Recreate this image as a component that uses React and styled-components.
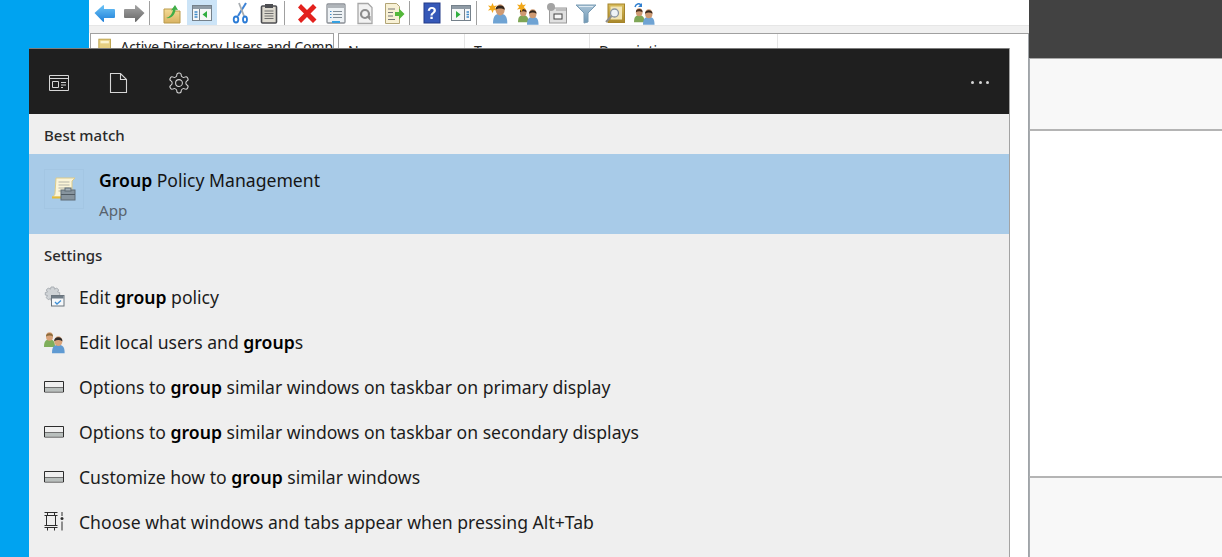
import React from "react";
import styled, { createGlobalStyle } from "styled-components";

const GlobalStyle = createGlobalStyle`
  html, body { margin: 0; padding: 0; height: 100%; overflow: hidden; }
  body { font-family: "Noto Sans", "Open Sans", sans-serif; background: #00a3f0; }
  #root { height: 100%; }
`;

const Desktop = styled.div`
  position: relative;
  display: flex;
  width: 1222px;
  height: 557px;
  overflow: hidden;
  background: #00a3f0;
`;

const DesktopStrip = styled.div`
  width: 89px;
  flex: none;
`;

const MmcWindow = styled.div`
  width: 940px;
  flex: none;
  display: flex;
  flex-direction: column;
  background: #fff;
`;

const Toolbar = styled.div`
  height: 25px;
  display: flex;
  align-items: center;
  padding-left: 1px;
  flex: none;
`;

const ToolIcon = styled.span`
  width: ${({ $w }) => $w || 29}px;
  margin-left: ${({ $gap }) => $gap || 0}px;
  height: 25px;
  flex: none;
  display: flex;
  align-items: center;
  justify-content: center;
  background: ${({ $active }) => ($active ? "#cce4f7" : "transparent")};
  svg { display: block; overflow: visible; filter: blur(0.3px); }
`;

const ToolSep = styled.span`
  width: 1px;
  height: 24px;
  margin: 0 7px 0 1px;
  flex: none;
  background: #a0a0a0;
`;

const Gutter = styled.div`
  height: 8px;
  flex: none;
  background: #f0f0f0;
  border-top: 1px solid #e6e6e6;
  box-sizing: border-box;
`;

const Panes = styled.div`
  flex: 1;
  display: flex;
  gap: 4px;
  padding-left: 1px;
`;

const TreePane = styled.div`
  width: 244px;
  flex: none;
  border: 1px solid #a0a0a0;
  border-bottom: none;
  box-sizing: border-box;
  display: flex;
  gap: 9px;
  padding: 3px 0 0 7px;
  font-size: 13.8px;
  color: #222;
  white-space: nowrap;
  overflow: hidden;
`;

const ListPane = styled.div`
  flex: 1;
  border: 1px solid #a0a0a0;
  border-right-color: #a0a4a8;
  border-bottom: none;
  box-sizing: border-box;
  display: flex;
`;

const ListHead = styled.div`
  width: ${({ $w }) => $w}px;
  flex: none;
  height: 22px;
  box-sizing: border-box;
  padding: 7px 0 0 9px;
  font-size: 14px;
  color: #222;
  border-right: 1px solid #e5e5e5;
`;

const SideWindow = styled.div`
  flex: 1;
  display: flex;
  flex-direction: column;
  background: #fff;
`;

const SideTitle = styled.div`
  height: 58px;
  flex: none;
  background: #424242;
`;

const SideHeader = styled.div`
  height: 73px;
  flex: none;
  box-sizing: border-box;
  background: #f8f8f8;
  border-left: 1px solid #a8acb0;
  border-top: 1px solid #a8a8a8;
  border-bottom: 2px solid #b4b4b4;
`;

const SideBody = styled.div`
  flex: 1;
  border-left: 1px solid #a8acb0;
`;

const SideFooter = styled.div`
  height: 81px;
  flex: none;
  box-sizing: border-box;
  background: #f8f8f8;
  border-left: 1px solid #a8acb0;
  border-top: 2px solid #b4b4b4;
`;

const SearchFlyout = styled.div`
  position: absolute;
  left: 29px;
  top: 48px;
  width: 981px;
  height: 509px;
  box-sizing: border-box;
  display: flex;
  flex-direction: column;
  background: #efefef;
  border-right: 1px solid #a3a3a3;
`;

const FlyoutBar = styled.div`
  height: 66px;
  flex: none;
  display: flex;
  align-items: center;
  background: #1f1f1f;
  border-top: 1px solid #7d7d7d;
  box-sizing: border-box;
  padding: 2px 20px 0 20px;
  color: #d6d6d6;
`;

const BarIcon = styled.span`
  width: 60px;
  flex: none;
  display: flex;
  svg { display: block; }
`;

const MoreDots = styled.span`
  margin-left: auto;
  display: flex;
  gap: 4.5px;
  i {
    width: 3px;
    height: 3px;
    border-radius: 50%;
    background: #d6d6d6;
  }
`;

const SectionTitle = styled.div`
  height: 40px;
  flex: none;
  box-sizing: border-box;
  padding: 11px 0 0 15px;
  font-size: 15px;
  line-height: 20px;
  font-weight: 500;
  color: #2a2a2a;
`;

const BestMatch = styled.div`
  height: 80px;
  flex: none;
  display: flex;
  background: #a8cbe8;
`;

const AppTile = styled.div`
  width: 40px;
  height: 40px;
  margin: 15px 15px 0 15px;
  flex: none;
  display: flex;
  align-items: center;
  justify-content: center;
  outline: 1px solid #a3c6e3;
  outline-offset: -1px;
  svg { filter: blur(0.3px); }
`;

const BestText = styled.div`
  display: flex;
  flex-direction: column;
  padding-top: 13px;
`;

const BestName = styled.div`
  font-size: 17.6px;
  line-height: 26px;
  color: #151515;
  b { font-weight: 600; color: #000; }
`;

const BestKind = styled.div`
  font-size: 15.2px;
  line-height: 20px;
  margin-top: 7px;
  color: #58636d;
`;

const ResultRow = styled.div`
  height: 45px;
  flex: none;
  display: flex;
  align-items: center;
  padding-left: 15px;
  gap: 15px;
  font-size: 17.6px;
  color: #1c1c1c;
  white-space: nowrap;
  b { font-weight: 600; color: #000; }
`;

const RowIcon = styled.span`
  width: 20px;
  height: 20px;
  flex: none;
  display: flex;
  align-items: center;
  justify-content: center;
  svg { display: block; overflow: visible; }
`;

const Svg = ({ size = 22, children }) => (
  <svg width={size} height={size} viewBox={`0 0 ${size} ${size}`} fill="none">
    {children}
  </svg>
);

const Gradients = () => (
  <svg width="0" height="0" style={{ position: "absolute" }}>
    <defs>
      <linearGradient id="blueArrow" x1="0" y1="0" x2="0" y2="1">
        <stop offset="0" stopColor="#6cc4f7" />
        <stop offset="1" stopColor="#1f7fd8" />
      </linearGradient>
      <linearGradient id="greyArrow" x1="0" y1="0" x2="0" y2="1">
        <stop offset="0" stopColor="#a6a6a6" />
        <stop offset="1" stopColor="#676767" />
      </linearGradient>
      <linearGradient id="tan" x1="0" y1="0" x2="0" y2="1">
        <stop offset="0" stopColor="#f5dc96" />
        <stop offset="1" stopColor="#d9b262" />
      </linearGradient>
      <linearGradient id="steel" x1="0" y1="0" x2="0" y2="1">
        <stop offset="0" stopColor="#a9c3d6" />
        <stop offset="1" stopColor="#6f98b5" />
      </linearGradient>
      <linearGradient id="gold" x1="0" y1="0" x2="0" y2="1">
        <stop offset="0" stopColor="#d9bd5c" />
        <stop offset="1" stopColor="#a9882a" />
      </linearGradient>
    </defs>
  </svg>
);

/* iconos de la barra */
const ArrowLeft = () => (
  <Svg>
    <path d="M.5 11 9 3.300q1-.6 1 .7V7h10q1 0 1 1v7q0 1-1 1H10v3q0 1.300-1 .7z" fill="url(#blueArrow)" />
  </Svg>
);
const ArrowRight = () => (
  <Svg>
    <path d="M21.500 11 13 3.300q-1-.6-1 .7V7H2q-1 0-1 1v7q0 1 1 1h10v3q0 1.300 1 .7z" fill="url(#greyArrow)" />
  </Svg>
);
const FolderUp = () => (
  <Svg>
    <path d="M3 7h9l2 2h5v12H3z" fill="url(#tan)" stroke="#b99a4a" />
    <path d="M5 16c4-1 6-4 7-8l-2 .5L14 3l3 5-2.500-.3C14 13 10 17 5 16z" fill="#3fae48" />
  </Svg>
);
const ConsoleTree = () => (
  <Svg>
    <rect x="1.500" y="3.500" width="19" height="15" fill="#f5f7f8" stroke="#75818b" />
    <rect x="2" y="4" width="18" height="3" fill="#8f9ba5" />
    <path d="M8.500 7v11" stroke="#75818b" />
    <path d="M3.500 10h3M3.500 12.500h3M3.500 15h3" stroke="#3f8bc9" strokeWidth="1.300" />
    <path d="M16 9v7l-4.500-3.500z" fill="#2fae40" />
  </Svg>
);
const Scissors = () => (
  <Svg>
    <path d="M17 1 9 14" stroke="#3d83d6" strokeWidth="2" />
    <path d="M10 1l5 13" stroke="#a8adb1" strokeWidth="1.800" />
    <ellipse cx="7" cy="17.500" rx="2.300" ry="3" stroke="#2a7bd6" strokeWidth="1.800" />
    <ellipse cx="16" cy="17.500" rx="2" ry="3" stroke="#2a7bd6" strokeWidth="1.800" />
  </Svg>
);
const Clipboard = () => (
  <Svg>
    <rect x="3.500" y="4" width="15" height="17" rx="1" fill="#dcd9cf" stroke="#4d4e52" strokeWidth="1.600" />
    <rect x="7" y="2" width="8" height="4" fill="#4d4e52" />
    <path d="M6.500 9h9M6.500 11.500h9M6.500 14h9M6.500 16.500h9" stroke="#6f6f6f" />
  </Svg>
);
const RedCross = () => (
  <Svg>
    <path d="M2 5.500 5 2l6 6 6-6 3.500 3.500-6 6 6 6L17 21l-6-6-6 6-3-3.500 6-6z" fill="#e3211d" />
  </Svg>
);
const Properties = () => (
  <Svg>
    <rect x="2" y="2" width="18" height="19" rx="1" fill="#eef2f5" stroke="#8a8f95" strokeWidth="1.300" />
    <rect x="3" y="3" width="16" height="3" fill="#b0b5ba" />
    <path d="M8 9.500h9M8 12.500h9M8 15.500h9" stroke="#7f8b95" />
    <path d="M5 9.500h1.500M5 12.500h1.500M5 15.500h1.500" stroke="#3f8bc9" />
    <path d="M7 20h8" stroke="#35a0e0" strokeWidth="2" />
  </Svg>
);
const Refresh = () => (
  <Svg>
    <path d="M4 1.500h10l4 4v16H4z" fill="#f2f2f2" stroke="#a7a7a7" strokeWidth="1.300" />
    <circle cx="11" cy="12" r="4" stroke="#8d8d8d" strokeWidth="2.200" />
    <path d="M12 14h4.500v5z" fill="#8d8d8d" />
  </Svg>
);
const ExportList = () => (
  <Svg>
    <path d="M2.500 1.500h11l3 3v17h-14z" fill="#f8f1d5" stroke="#b2a576" />
    <path d="M5 7h7M5 10.500h5M5 14h5M5 17.500h7" stroke="#767676" />
    <path d="M12 10h4V6.500l5.500 5.500-5.500 5.500V14h-4z" fill="#54b83a" />
  </Svg>
);
const Help = () => (
  <Svg>
    <rect x="3" y="1" width="16" height="20" fill="#3558b8" stroke="#223a88" />
    <text x="11" y="17" textAnchor="middle" fontSize="16" fontWeight="700" fontFamily="Liberation Sans" fill="#fff">?</text>
  </Svg>
);
const ActionPane = () => (
  <Svg>
    <rect x="1.500" y="3.500" width="19" height="15" fill="#f5f7f8" stroke="#75818b" />
    <rect x="2" y="4" width="18" height="3" fill="#8f9ba5" />
    <path d="M14.500 7v11" stroke="#75818b" />
    <path d="M16.500 10h2.500M16.500 12.500h2.500M16.500 15h2.500" stroke="#3f8bc9" strokeWidth="1.300" />
    <path d="M6 9v7l4.500-3.500z" fill="#2fae40" />
  </Svg>
);
const Person = ({ x, y, shirt, skin = "#cf9a72", hair = "#4a3020", s = 1 }) => (
  <g transform={`translate(${x} ${y}) scale(${s})`}>
    <path d="M0 15c0-6 2-7.500 5.500-7.500S11 9 11 15z" fill={shirt} />
    <ellipse cx="5.500" cy="4.500" rx="3.500" ry="4.300" fill={skin} />
    <path d="M2 4.500C1.500 0 9.500 0 9 4.500 7 3 4 3 2 4.500z" fill={hair} />
  </g>
);
const Spark = ({ x, y }) => (
  <path
    transform={`translate(${x} ${y})`}
    d="M4.500 0 5.800 3 9 2.500 6.800 5 9 7.500 5.800 7 4.500 10 3.200 7 0 7.500 2.200 5 0 2.500l3.200.5z"
    fill="#f2a81a"
  />
);
const NewUser = () => (
  <Svg>
    <Person x={5} y={2} shirt="#6fa3d3" hair="#33261c" s={1.300} />
    <Spark x={0} y={1} />
  </Svg>
);
const NewGroup = () => (
  <Svg>
    <Person x={1} y={6} shirt="#7fa656" s={0.950} />
    <Person x={10} y={7} shirt="#6fa3d3" hair="#33261c" s={1.050} />
    <Spark x={0} y={0} />
  </Svg>
);
const NewOu = () => (
  <Svg>
    <rect x="3.500" y="6" width="17" height="15" fill="#e0e0e0" stroke="#9a9a9a" />
    <rect x="8" y="12" width="8" height="5" fill="#f7f7f7" stroke="#444" />
    <circle cx="5" cy="5" r="4" fill="#a3a3a3" />
    <rect x="10" y="6" width="10" height="3" fill="#bdbdbd" />
  </Svg>
);
const Filter = () => (
  <Svg>
    <path d="M1 3h20l-8 8v9l-4 1V11z" fill="url(#steel)" stroke="#7a9cb4" />
    <path d="M4 4.500h14" stroke="#dce9f2" />
  </Svg>
);
const FindBox = () => (
  <Svg>
    <rect x="4" y="2" width="16.500" height="18.500" fill="url(#gold)" stroke="#a5842a" />
    <rect x="6.500" y="4.500" width="11.500" height="13" fill="#f2e5b5" />
    <circle cx="10.500" cy="11" r="4" fill="#eef3f6" stroke="#8b95a0" strokeWidth="1.300" />
    <path d="M7.500 14 2 20" stroke="#8f8f8f" strokeWidth="2" />
  </Svg>
);
const ChangeGroup = () => (
  <Svg>
    <Person x={1} y={6} shirt="#7fa656" s={0.950} />
    <Person x={10} y={7} shirt="#6fa3d3" hair="#33261c" s={1.050} />
    <path d="M2 5c1-3.500 4-4 6-2" stroke="#2f7fd0" strokeWidth="1.500" />
    <path d="M9 1v4H5z" fill="#2f7fd0" />
  </Svg>
);

/* iconos del panel oscuro */
const AppsIcon = () => (
  <Svg size={20}>
    <path d="M.500 2.500h19v15H.500zM.500 5.500h19" stroke="currentColor" />
    <path d="M3.500 8.500h6v6h-6zM12 9.500h5M12 12h5M12 14.500h2" stroke="currentColor" />
  </Svg>
);
const DocIcon = () => (
  <Svg size={20}>
    <path d="M1.500.5h10l6 6v13h-16zM11.500.5v6h6" stroke="currentColor" strokeWidth="1.100" />
  </Svg>
);
const GearIcon = () => (
  <svg width="20" height="20" viewBox="2 2 20 20" fill="none" stroke="currentColor" strokeWidth="1.050" overflow="visible">
    <path d="M12.220 2h-.44a2 2 0 0 0-2 2v.18a2 2 0 0 1-1 1.730l-.43.250a2 2 0 0 1-2 0l-.150-.080a2 2 0 0 0-2.730.730l-.220.380a2 2 0 0 0 .730 2.730l.150.100a2 2 0 0 1 1 1.720v.510a2 2 0 0 1-1 1.740l-.150.090a2 2 0 0 0-.730 2.730l.220.380a2 2 0 0 0 2.730.730l.150-.080a2 2 0 0 1 2 0l.430.250a2 2 0 0 1 1 1.730V20a2 2 0 0 0 2 2h.440a2 2 0 0 0 2-2v-.180a2 2 0 0 1 1-1.730l.430-.250a2 2 0 0 1 2 0l.150.080a2 2 0 0 0 2.730-.730l.220-.390a2 2 0 0 0-.730-2.730l-.150-.080a2 2 0 0 1-1-1.740v-.500a2 2 0 0 1 1-1.740l.150-.090a2 2 0 0 0 .730-2.730l-.220-.380a2 2 0 0 0-2.730-.730l-.150.080a2 2 0 0 1-2 0l-.430-.250a2 2 0 0 1-1-1.730V4a2 2 0 0 0-2-2z" />
    <circle cx="12" cy="12" r="3.400" />
  </svg>
);

/* iconos de resultados */
const ScrollIcon = () => (
  <svg width="24" height="24" viewBox="0 0 24 24" fill="none">
    <path d="M4 1h19l-3 3v16H0c2-1 3-2 3-4z" fill="#fbf5d8" stroke="#dcca8a" />
    <path d="M6.500 5h11M6.500 8h11M6.500 11h11M6.500 14h6" stroke="#b3b3a8" />
    <path d="M0 20.500h13" stroke="#e3bb3a" strokeWidth="2" />
    <rect x="9" y="13" width="14" height="10" fill="#87949e" stroke="#5f6c76" />
    <rect x="13" y="11" width="6" height="3" fill="#a3aeb6" stroke="#5f6c76" />
    <path d="M9 17.500h14" stroke="#4f5a63" />
  </svg>
);
const SettingsGear = () => (
  <Svg size={21}>
    <path d="M7 1h3l.5 2.200 2.200-1.200 2 2L13.500 6l2.200.5v3h-2.200l1.200 2.200-2 2-2.200-1.200-.5 2.200H7l-.5-2.200-2.200 1.200-2-2L3.500 9.500 1.300 9V6.500L3.500 6 2.300 4l2-2 2.200 1.200z" fill="#cfd3d6" stroke="#a9aeb3" />
    <rect x="7.500" y="9.500" width="12.500" height="10.500" fill="#f6f8fa" stroke="#6a747d" />
    <rect x="8" y="10" width="11.500" height="2.500" fill="#717d87" />
    <path d="M11 16l2 2 4-3.500" stroke="#3d8fd6" strokeWidth="1.300" />
  </Svg>
);
const UsersIcon = () => (
  <Svg size={21}>
    <Person x={0} y={1} shirt="#7fae5a" skin="#d9a37a" hair="#8a6a3a" s={1} />
    <Person x={8} y={5} shirt="#5f9ad2" skin="#d9a37a" hair="#2e2a28" s={1.150} />
  </Svg>
);
const TaskbarIcon = () => (
  <svg width="20" height="12" viewBox="0 0 20 12" fill="none">
    <path d="M.500.500h19v10.500H.500z" stroke="#2d2d2d" />
    <rect x="1" y="6.500" width="18" height="4" fill="#b9bfbd" />
    <path d="M1 6.500h18" stroke="#707070" />
  </svg>
);
const AltTabIcon = () => (
  <svg width="20" height="19" viewBox="0 0 20 19" fill="none" stroke="#2d2d2d">
    <path d="M.500.500h13M3.500.500v3M10.500.500v3M.500 3.500h13M2.500 3.500v10M11.500 3.500v10M.500 13.500h13M.500 15.500h13M3.500 15.500v3M10.500 15.500v3" />
    <circle cx="18" cy="6.500" r="1.500" fill="#2d2d2d" stroke="none" />
    <path d="M18 0v4M18 9.500v9" />
  </svg>
);

const tools = [
  { Icon: ArrowLeft },
  { Icon: ArrowRight },
  "sep",
  { Icon: FolderUp, w: 30 },
  { Icon: ConsoleTree, w: 30, active: true },
  { Icon: Scissors, gap: 8 },
  { Icon: Clipboard },
  "sep",
  { Icon: RedCross },
  { Icon: Properties },
  { Icon: Refresh },
  { Icon: ExportList },
  "sep",
  { Icon: Help },
  { Icon: ActionPane },
  "sep",
  { Icon: NewUser },
  { Icon: NewGroup },
  { Icon: NewOu },
  { Icon: Filter },
  { Icon: FindBox },
  { Icon: ChangeGroup },
];

const results = [
  [<SettingsGear />, <>Edit <b>group</b> policy</>],
  [<UsersIcon />, <>Edit local users and <b>group</b>s</>],
  [<TaskbarIcon />, <>Options to <b>group</b> similar windows on taskbar on primary display</>],
  [<TaskbarIcon />, <>Options to <b>group</b> similar windows on taskbar on secondary displays</>],
  [<TaskbarIcon />, <>Customize how to <b>group</b> similar windows</>],
  [<AltTabIcon />, <>Choose what windows and tabs appear when pressing Alt+Tab</>],
];

export default function App() {
  return (
    <Desktop>
      <GlobalStyle />
      <Gradients />
      <DesktopStrip />
      <MmcWindow>
        <Toolbar>
          {tools.map((t, i) => {
            if (t === "sep") return <ToolSep key={i} />;
            const { Icon, w, gap, active } = t;
            return (
              <ToolIcon key={i} $w={w} $gap={gap} $active={active}>
                <Icon />
              </ToolIcon>
            );
          })}
        </Toolbar>
        <Gutter />
        <Panes>
          <TreePane>
            <Svg size={16}>
              <rect x="1" y="1" width="14" height="16" fill="#e6cf82" stroke="#b59a3f" />
              <rect x="3" y="3" width="10" height="3" fill="#fbf3cf" />
            </Svg>
            Active Directory Users and Comp
          </TreePane>
          <ListPane>
            <ListHead $w={126}>Name</ListHead>
            <ListHead $w={125}>Type</ListHead>
            <ListHead $w={188}>Description</ListHead>
          </ListPane>
        </Panes>
      </MmcWindow>
      <SideWindow>
        <SideTitle />
        <SideHeader />
        <SideBody />
        <SideFooter />
      </SideWindow>
      <SearchFlyout>
        <FlyoutBar>
          <BarIcon><AppsIcon /></BarIcon>
          <BarIcon><DocIcon /></BarIcon>
          <BarIcon><GearIcon /></BarIcon>
          <MoreDots><i /><i /><i /></MoreDots>
        </FlyoutBar>
        <SectionTitle>Best match</SectionTitle>
        <BestMatch>
          <AppTile><ScrollIcon /></AppTile>
          <BestText>
            <BestName><b>Group</b> Policy Management</BestName>
            <BestKind>App</BestKind>
          </BestText>
        </BestMatch>
        <SectionTitle>Settings</SectionTitle>
        {results.map(([icon, label], i) => (
          <ResultRow key={i}>
            <RowIcon>{icon}</RowIcon>
            <span>{label}</span>
          </ResultRow>
        ))}
      </SearchFlyout>
    </Desktop>
  );
}
